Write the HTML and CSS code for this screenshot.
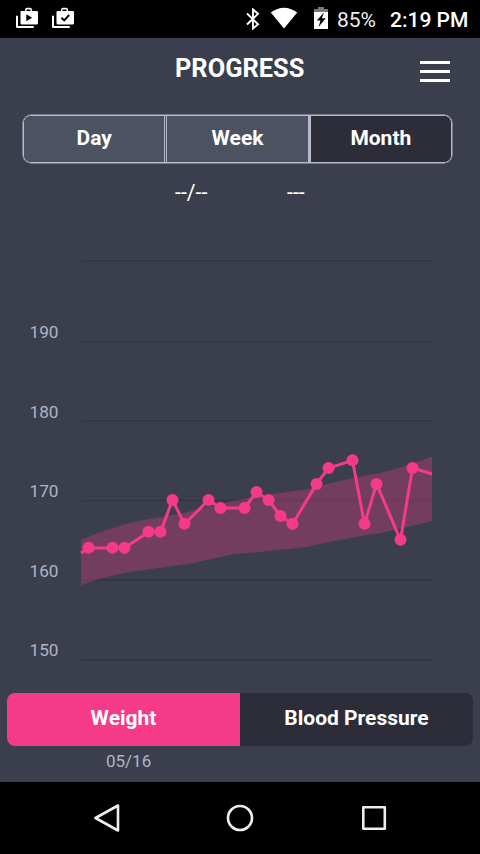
FILE: index.html
```html
<!DOCTYPE html>
<html lang="en">
<head>
  <meta charset="UTF-8">
  <meta name="viewport" content="width=device-width, initial-scale=1.0">
  <title>Progress</title>
  <link rel="stylesheet" href="styles.css">
</head>
<body>
  <div class="status-bar">
    <svg class="bag" width="24" height="24" viewBox="0 0 24 24">
      <path d="M2 9.500v10.500h16" fill="none" stroke="#fff" stroke-width="2" stroke-linejoin="round" stroke-linecap="round"/>
      <path d="M6.500 4h3.500V3Q10 .7 12 .7h3q2 0 2 2.300V4h5q1 0 1 1v11q0 1.500-1.500 1.500H7Q5.500 17.500 5.500 16V5q0-1 1-1zM11.500 4h4V2.400h-4zM11.300 7.200v7l5.800-3.500z" fill="#fff" fill-rule="evenodd"/>
    </svg>
    <svg class="bag" width="24" height="24" viewBox="0 0 24 24">
      <path d="M2 9.500v10.500h16" fill="none" stroke="#fff" stroke-width="2" stroke-linejoin="round" stroke-linecap="round"/>
      <path d="M6.500 4h3.500V3Q10 .7 12 .7h3q2 0 2 2.300V4h5q1 0 1 1v11q0 1.500-1.500 1.500H7Q5.500 17.500 5.500 16V5q0-1 1-1zM11.500 4h4V2.400h-4z" fill="#fff" fill-rule="evenodd"/>
      <path d="M10.500 10.800l2.700 2.600 5-5.400" fill="none" stroke="#000" stroke-width="1.900"/>
    </svg>
    <svg class="bluetooth" width="14" height="22" viewBox="0 0 14 22">
      <path d="M1 5.500l11 10.700-5 4.300v-19l5 4.400L1 16.500" fill="none" stroke="#fff" stroke-width="1.900"/>
    </svg>
    <svg class="wifi" width="28" height="22" viewBox="0 0 28 22">
      <path d="M.8 5.500Q14-4 27.200 5.500L14 21.500z" fill="#fff"/>
    </svg>
    <svg class="battery" width="14" height="22" viewBox="0 0 14 22">
      <path d="M0 5V2h4V0h6v2h4v3z" fill="#777"/>
      <path d="M0 5h14v17H0zM10 5.500L2.800 13.500h3.700L4.500 20l7.200-8.700H7.800z" fill="#fff" fill-rule="evenodd"/>
    </svg>
    <span class="percent">85%</span>
    <span class="clock">2:19 PM</span>
  </div>

  <main class="app">
    <header class="header">
      <h1>PROGRESS</h1>
      <button class="menu" aria-label="Menu"><span></span><span></span><span></span></button>
    </header>

    <div class="period">
      <button>Day</button>
      <button>Week</button>
      <button class="active">Month</button>
    </div>

    <div class="reading">
      <span class="reading-date">--/--</span>
      <span>---</span>
    </div>

    <svg class="chart" width="480" height="474" viewBox="0 220 480 474">
      <g class="grid">
        <path d="M81 261H432M81 341.700H432M81 421H432M81 500.500H432M81 580H432M81 659.700H432"/>
      </g>
      <g class="labels">
        <text x="29.500" y="338">190</text>
        <text x="29.500" y="418">180</text>
        <text x="29.500" y="497">170</text>
        <text x="29.500" y="577">160</text>
        <text x="29.500" y="656">150</text>
      </g>
      <path class="range" d="M81 540Q108 528 136 521.500Q160 517 184 513Q210 506 238 500Q270 494 306 489.500Q342 479.500 378 473.500Q405 467 432 456.500V521Q405 528 378 533.500Q340 539 306 547Q270 551.500 234 554Q215 558 196 562.500Q168 567 136 571Q100 577 81 585.500z"/>
      <polyline class="line" points="81,553 88.500,548 112.500,548 124.500,548 148.500,532 160.500,532 172.500,500 184.500,524 208.500,500 220.500,508 244.500,508 256.500,492 268.500,500 280.500,516 292.500,524 316.500,484 328.500,468 352.500,460.500 364.500,524 376.500,484 400.500,540 412.500,468 432,474"/>
      <g class="dots">
        <circle cx="88.500" cy="547.700" r="6"/>
        <circle cx="112.500" cy="547.700" r="6"/>
        <circle cx="124.500" cy="547.700" r="6"/>
        <circle cx="148.500" cy="531.800" r="6"/>
        <circle cx="160.500" cy="531.800" r="6"/>
        <circle cx="172.500" cy="500" r="6"/>
        <circle cx="184.500" cy="523.800" r="6"/>
        <circle cx="208.500" cy="500" r="6"/>
        <circle cx="220.500" cy="508" r="6"/>
        <circle cx="244.500" cy="508" r="6"/>
        <circle cx="256.500" cy="492" r="6"/>
        <circle cx="268.500" cy="500" r="6"/>
        <circle cx="280.500" cy="516" r="6"/>
        <circle cx="292.500" cy="523.800" r="6"/>
        <circle cx="316.500" cy="484" r="6"/>
        <circle cx="328.500" cy="468" r="6"/>
        <circle cx="352.500" cy="460.300" r="6"/>
        <circle cx="364.500" cy="523.800" r="6"/>
        <circle cx="376.500" cy="484" r="6"/>
        <circle cx="400.500" cy="539.800" r="6"/>
        <circle cx="412.500" cy="468" r="6"/>
      </g>
    </svg>

    <div class="metric">
      <button class="active">Weight</button>
      <button>Blood Pressure</button>
    </div>

    <div class="axis-date">05/16</div>
  </main>

  <nav class="nav-bar">
    <svg width="28" height="30" viewBox="0 0 28 30">
      <path d="M26 2.500v25L3.500 15z"/>
    </svg>
    <svg width="28" height="30" viewBox="0 0 28 30">
      <circle cx="14" cy="15" r="12"/>
    </svg>
    <svg width="28" height="30" viewBox="0 0 28 30">
      <rect x="3.300" y="4.300" width="21.500" height="21.500"/>
    </svg>
  </nav>
</body>
</html>
```

FILE: styles.css
```css
:root {
  --bg: #3b3f4d;
  --dark: #2c2d38;
  --border: #b7bacb;
  --pink: #f53b88;
}

* {
  box-sizing: border-box;
}

body {
  margin: 0;
  width: 480px;
  height: 854px;
  display: flex;
  flex-direction: column;
  overflow: hidden;
  background: #000;
  color: #fff;
  font-family: Roboto, sans-serif;
}

svg {
  display: block;
  flex-shrink: 0;
}

button {
  margin: 0;
  padding: 0;
  border: 0;
  background: none;
  color: #fff;
  font-family: inherit;
  font-size: 21px;
  font-weight: 700;
}

.status-bar {
  height: 38px;
  display: flex;
  align-items: flex-start;
  padding: 7px 0 0 15px;
  line-height: 27px;
  white-space: nowrap;
}

.bag {
  margin-right: 12px;
}

.bluetooth {
  margin: 1px 10px 0 159px;
}

.wifi {
  margin-right: 16px;
}

.battery {
  margin-right: 9px;
}

.percent {
  width: 53px;
  font-size: 21px;
  color: #eee;
}

.clock {
  font-size: 21px;
  font-weight: 500;
}

.app {
  height: 744px;
  display: flex;
  flex-direction: column;
  background: var(--bg);
}

.header {
  height: 77px;
  display: flex;
  justify-content: space-between;
  padding: 15px 30px 0 175px;
}

.header h1 {
  margin: 0;
  font-size: 25.400px;
  line-height: 31px;
  font-weight: 700;
}

.menu {
  width: 30px;
  height: 21px;
  margin-top: 8px;
  display: flex;
  flex-direction: column;
  justify-content: space-between;
}

.menu span {
  width: 30px;
  height: 3px;
  background: #fff;
}

.period {
  display: flex;
  width: 429px;
  height: 48px;
  margin: 0 0 1px 23px;
  border: 1px solid var(--border);
  border-radius: 8px;
  box-shadow: 0 0 0 0.5px var(--border);
  overflow: hidden;
}

.period button {
  flex: 1;
  padding-bottom: 2px;
  background: #4c5261;
}

.period button + button {
  border-left: 3px double var(--border);
}

.period .active {
  background: var(--dark);
}

.period button + .active {
  border-left-style: solid;
}

.reading {
  height: 56px;
  display: flex;
  padding: 16px 0 0 175px;
  font-size: 21.300px;
  line-height: 26px;
}

.reading-date {
  width: 112px;
}

.grid path {
  stroke: #343742;
  stroke-width: 2;
}

.labels text {
  fill: #b1b4c4;
  font-size: 17.200px;
}

.range {
  fill: var(--pink);
  fill-opacity: 0.3;
}

.line {
  fill: none;
  stroke: var(--pink);
  stroke-width: 3;
}

.dots circle {
  fill: var(--pink);
}

.metric {
  display: flex;
  height: 53px;
  margin: -1px 7px 0;
  border-radius: 8px;
  overflow: hidden;
}

.metric button {
  flex: 1;
  padding-bottom: 4px;
  background: var(--dark);
}

.metric .active {
  background: var(--pink);
}

.axis-date {
  padding: 5px 0 0 106px;
  color: #b1b4c4;
  font-size: 17px;
  line-height: 20px;
}

.nav-bar {
  height: 72px;
  display: flex;
  justify-content: space-between;
  align-items: center;
  padding: 0 92px;
}

.nav-bar svg {
  fill: none;
  stroke: #eee;
  stroke-width: 2.600;
  stroke-linejoin: round;
}
```
